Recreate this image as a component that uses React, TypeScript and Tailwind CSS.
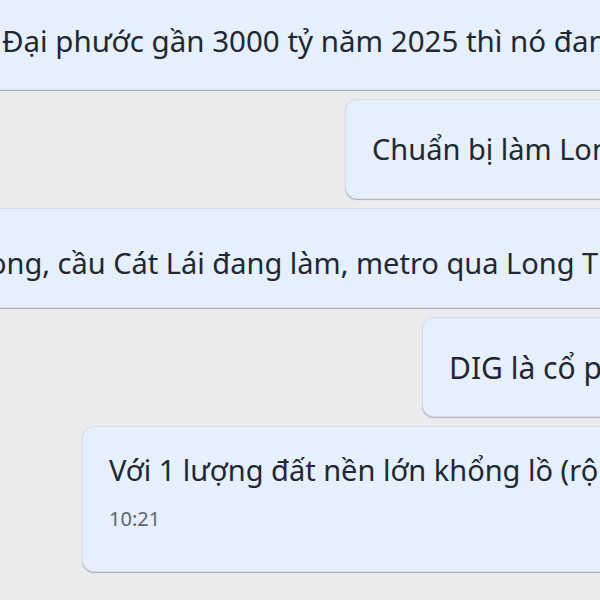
const bubble =
  "rounded-[12px] bg-[#e6effc] border border-[#d8dee7] shadow-[0_1px_1px_rgba(60,70,90,0.35)] whitespace-nowrap text-[#222831]";

export default function App() {
  return (
    <div
      className="w-[600px] h-[600px] overflow-hidden bg-[#ececee] flex flex-col gap-[9px]"
      style={{ fontFamily: '"Noto Sans", "Open Sans", sans-serif' }}
    >
      <div className={`${bubble} -mt-[11px] -ml-[20px] w-[760px] h-[101px] flex items-center pl-[21px] pt-[3px] text-[29.5px]`}>
        Đại phước gần 3000 tỷ năm 2025 thì nó đang
      </div>
      <div className={`${bubble} ml-[345px] w-[320px] h-[100px] flex items-center pl-[26px] text-[29px]`}>
        Chuẩn bị làm Long
      </div>
      <div className={`${bubble} -ml-[20px] w-[760px] h-[100px] flex items-center pl-[8px] pt-[10px] text-[29px]`}>
        ong, cầu Cát Lái đang làm, metro qua Long Thành
      </div>
      <div className={`${bubble} ml-[422px] w-[260px] h-[100px] flex items-center pl-[26px] text-[30px]`}>
        DIG là cổ phiếu
      </div>
      <div className={`${bubble} ml-[82px] w-[600px] h-[146px] pl-[26px] pt-[23px]`}>
        <p className="text-[29px] leading-[40px]">Với 1 lượng đất nền lớn khổng lồ (rộng</p>
        <p className="text-[20px] text-[#5b6676] mt-[17px] leading-[24px]">10:21</p>
      </div>
    </div>
  );
}
